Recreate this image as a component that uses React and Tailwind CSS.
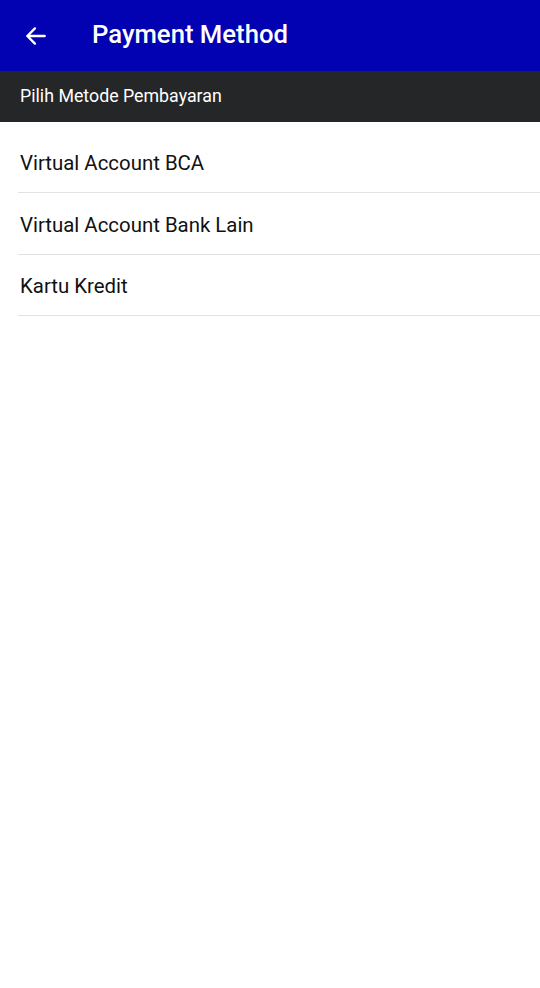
import React from 'react';

const methods = ['Virtual Account BCA', 'Virtual Account Bank Lain', 'Kartu Kredit'];

const App = () => {
  return (
    <div className="min-h-[988px] bg-white" style={{ fontFamily: 'Roboto, "Liberation Sans", sans-serif' }}>
      {/* Header */}
      <div className="h-[71px] bg-[#0202b3] flex items-center">
        <button className="w-[71px] h-[71px] flex items-center justify-center text-white">
          <svg className="w-[26px] h-[26px]" viewBox="0 0 24 24" fill="none" stroke="currentColor" strokeWidth={2.2} strokeLinecap="round" strokeLinejoin="round">
            <path d="M20 12H4M11 5l-7 7 7 7" />
          </svg>
        </button>
        <span className="ml-[21px] -mt-[2px] text-white text-[25.7px] font-medium">Payment Method</span>
      </div>

      {/* Section label */}
      <div className="h-[51px] bg-[#252628] flex items-center px-[20px]">
        <span className="text-white text-[17.8px]">Pilih Metode Pembayaran</span>
      </div>

      {/* List */}
      <div className="pt-[9px] pl-[18px]">
        {methods.map((m) => (
          <div key={m} className="h-[62px] flex items-center border-b border-[#e3e3e3] last:h-[61px]">
            <span className="pl-[2px] pt-[3px] text-[20.4px] text-[#111111]">{m}</span>
          </div>
        ))}
      </div>
    </div>
  );
};

export default App;
